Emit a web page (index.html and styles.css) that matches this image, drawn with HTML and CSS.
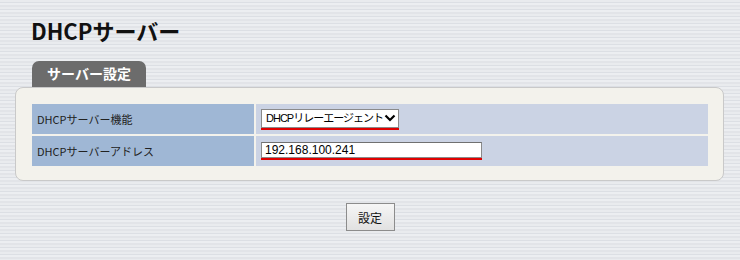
FILE: index.html
```html
<html>
	<head>
		<meta charset="UTF-8">
		<title>DHCPサーバー</title>
		<link rel="stylesheet" href="styles.css">
	</head>
	<body>
		<h1 class="title">DHCPサーバー</h1>
		<div class="tab">サーバー設定</div>
		<div class="panel">
			<div class="grid">
				<div class="label">DHCPサーバー機能</div>
				<div class="value">
					<span class="mark selwrap">
						<select class="sel">
							<option>DHCPリレーエージェント</option>
							<option>DHCPサーバー</option>
							<option>使用しない</option>
						</select>
						<svg class="arrow" width="12" height="8" viewBox="0 0 12 8"><path d="M1.5 1.5 L6 6 L10.5 1.5" fill="none" stroke="#000" stroke-width="2.2"/></svg>
					</span>
				</div>
				<div class="label">DHCPサーバーアドレス</div>
				<div class="value">
					<span class="mark"><input type="text" class="addr" value="192.168.100.241"></span>
				</div>
			</div>
		</div>
		<div class="buttons">
			<input type="submit" value="設定" class="submit">
		</div>
	</body>
</html>
```
FILE: styles.css
```css
body {
	margin: 0;
	font-family: "Noto Sans CJK JP", "Noto Sans", sans-serif;
	background-color: #e6e8ec;
	background-image: repeating-linear-gradient(to bottom, #e9ebee 0px, #e9ebee 2px, #dcdfe4 2px, #dcdfe4 3px, #eceef1 3px, #eceef1 5px, #e2e4e8 5px, #e2e4e8 7px);
	height: 260px;
}
.title {
	margin: 0;
	padding: 14px 0 0 31px;
	font-size: 22px;
	font-weight: bold;
	line-height: 32px;
	color: #111;
}
.tab {
	margin: 15px 0 0 32px;
	width: 114px;
	height: 26px;
	line-height: 25px;
	text-align: center;
	background: #6c6c6c;
	color: #fff;
	font-size: 14px;
	font-weight: bold;
	border-radius: 7px 7px 0 0;
}
.panel {
	margin: 0 16px 0 15px;
	padding: 16px 15px 14px 16px;
	background: #f3f2ec;
	border: 1px solid #c9c9c9;
	border-radius: 8px;
}
.grid {
	display: grid;
	grid-template-columns: 222px 1fr;
	gap: 2px;
}
.label {
	background: #9fb7d5;
	height: 30px;
	line-height: 30px;
	padding-left: 5px;
	font-size: 11px;
	color: #222;
}
.value {
	background: #cbd3e4;
	height: 30px;
	padding-left: 5px;
	display: flex;
	align-items: center;
}
.mark {
	display: inline-block;
	border-bottom: 2px solid #e00000;
	position: relative;
	line-height: 0;
}
.sel {
	appearance: none;
	-webkit-appearance: none;
	width: 138px;
	height: 19px;
	margin: 0;
	padding: 0 0 0 4px;
	border: 1px solid #8a8a8a;
	border-radius: 0;
	background: #fff;
	font-family: "Liberation Sans", "Noto Sans CJK JP", sans-serif;
	font-size: 11px;
	letter-spacing: -1px;
	color: #000;
}
.arrow {
	position: absolute;
	right: 3px;
	top: 5px;
}
.addr {
	width: 221px;
	height: 16px;
	margin: 0;
	padding: 0 0 0 3px;
	border: 1px solid #8a8a8a;
	border-top-color: #707070;
	font-family: "Liberation Sans", sans-serif;
	font-size: 12px;
	color: #000;
	box-sizing: border-box;
}
.buttons {
	text-align: center;
	margin-top: 22px;
}
.submit {
	width: 49px;
	height: 28px;
	padding: 0;
	background: linear-gradient(#f6f6f6, #e1e1e1);
	border: 1px solid #8c8c8c;
	border-radius: 0;
	font-family: "Noto Sans CJK JP", sans-serif;
	font-size: 12px;
	color: #111;
}
```
